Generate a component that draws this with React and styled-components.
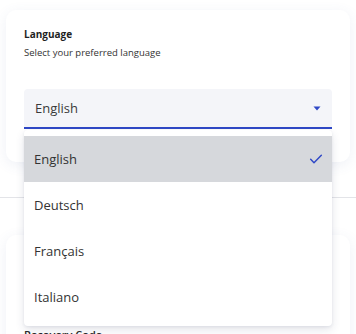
import React from "react";
import styled, { createGlobalStyle } from "styled-components";

const Global = createGlobalStyle`
  html, body { margin: 0; padding: 0; background: #ffffff; }
  body { font-family: "Open Sans", "Noto Sans", sans-serif; color: #2b2b2b; }
  * { box-sizing: border-box; }
`;

const Page = styled.div`
  width: 356px;
  height: 334px;
  overflow: hidden;
  padding: 10px 6px 0;
`;

const Card = styled.section`
  background: #ffffff;
  border-radius: 10px;
  box-shadow: 0 3px 14px rgba(70, 90, 160, 0.09);
  padding: ${(p) => p.$pad};
`;

const Title = styled.h3`
  margin: 0;
  font-size: 10px;
  line-height: 16px;
  font-weight: 700;
  color: #1f1f1f;
`;

const Subtitle = styled.p`
  margin: 4px 0 0;
  font-size: 9.5px;
  line-height: 14px;
  color: #333333;
`;

const SelectWrap = styled.div`
  position: relative;
  margin-top: 29px;
`;

const Field = styled.div`
  display: flex;
  align-items: center;
  justify-content: space-between;
  height: 40px;
  padding: 0 11px 0 11px;
  background: #f4f5f9;
  border-radius: 4px 4px 0 0;
  border-bottom: 2px solid #2f48c6;
  font-size: 13px;
  color: #3a3a3a;
`;

const Menu = styled.ul`
  position: absolute;
  top: 41px;
  left: 0;
  right: 0;
  margin: 0;
  padding: 6px 0;
  list-style: none;
  background: #ffffff;
  border-radius: 4px;
  box-shadow: 0 4px 10px rgba(40, 50, 90, 0.12), 0 1px 3px rgba(40, 50, 90, 0.08);
  z-index: 10;
`;

const Item = styled.li`
  display: flex;
  align-items: center;
  justify-content: space-between;
  height: 46px;
  padding: 0 8px 0 10px;
  font-size: 13px;
  color: #333333;
  background: ${(p) => (p.$selected ? "#d6d8dc" : "transparent")};
`;

const Divider = styled.hr`
  margin: 35px -6px 0;
  border: 0;
  border-top: 1px solid #e3e4e8;
`;

const Second = styled.div`
  margin-top: 37px;
`;

const Label = styled.div`
  margin-top: ${(p) => p.$mt || 0}px;
  font-size: 11px;
  line-height: 16px;
  font-weight: ${(p) => p.$weight || 400};
  color: #2b2b2b;
`;

const Arrow = () => (
  <svg width="8" height="5" viewBox="0 0 8 5" aria-hidden="true">
    <path d="M0.5 0.5 L7.5 0.5 L4 4.5 Z" fill="#2f48c6" />
  </svg>
);

const Check = () => (
  <svg width="16" height="16" viewBox="0 0 24 24" aria-hidden="true">
    <path d="M4 12.5 L9 17.5 L20 6.5" fill="none" stroke="#2f48c6" strokeWidth="2.2" strokeLinecap="round" strokeLinejoin="round" />
  </svg>
);

const languages = ["English", "Deutsch", "Français", "Italiano"];

export default function App() {
  const selected = "English";
  return (
    <>
      <Global />
      <Page>
        <Card $pad="16px 18px 33px">
          <Title>Language</Title>
          <Subtitle>Select your preferred language</Subtitle>
          <SelectWrap>
            <Field>
              <span>{selected}</span>
              <Arrow />
            </Field>
            <Menu>
              {languages.map((l) => (
                <Item key={l} $selected={l === selected}>
                  <span>{l}</span>
                  {l === selected && <Check />}
                </Item>
              ))}
            </Menu>
          </SelectWrap>
        </Card>
        <Divider />
        <Second>
          <Card $pad="18px 18px 20px">
            <Label $mt={74} $weight={600}>Recovery Code</Label>
          </Card>
        </Second>
      </Page>
    </>
  );
}
